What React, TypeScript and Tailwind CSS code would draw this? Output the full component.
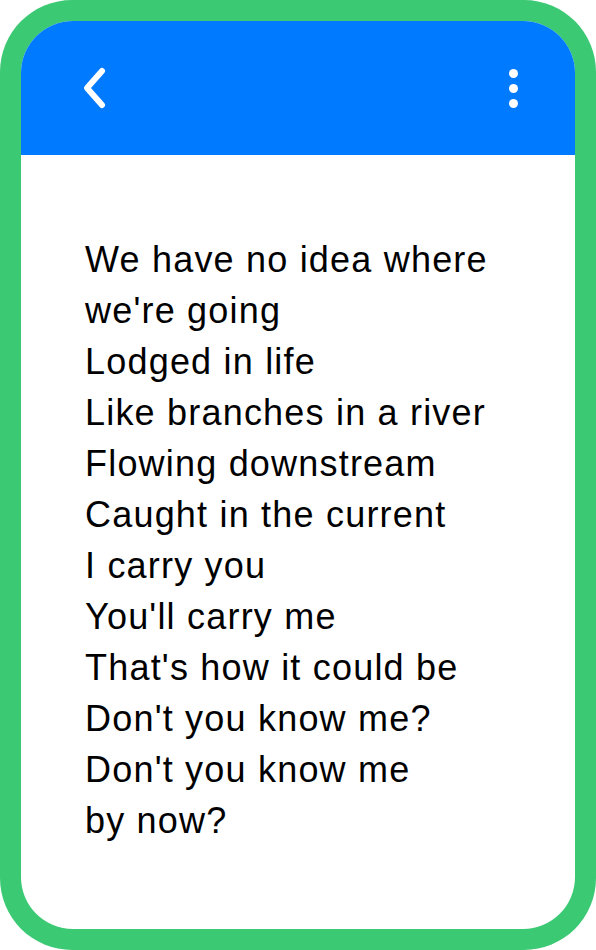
export default function App() {
  const lines = [
    "We have no idea where",
    "we're going",
    "Lodged in life",
    "Like branches in a river",
    "Flowing downstream",
    "Caught in the current",
    "I carry you",
    "You'll carry me",
    "That's how it could be",
    "Don't you know me?",
    "Don't you know me",
    "by now?",
  ];

  return (
    <div className="w-[596px] h-[950px] bg-white">
      <div className="w-full h-full rounded-[72px] bg-[#3bc974] p-[21px]">
        <div className="w-full h-full rounded-[52px] bg-white overflow-hidden flex flex-col">
          <header className="h-[134px] bg-[#007aff] flex items-center justify-between pl-[60px] pr-[56px]">
            <button className="w-[30px] h-[44px] flex items-center">
              <svg width="26" height="44" viewBox="0 0 26 44" fill="none">
                <path
                  d="M21 5 L6 22 L21 39"
                  stroke="white"
                  strokeWidth="6"
                  strokeLinecap="round"
                  strokeLinejoin="round"
                />
              </svg>
            </button>
            <button className="w-[12px] h-[44px] flex flex-col items-center justify-center gap-[6px]">
              <span className="w-[9px] h-[9px] rounded-full bg-white" />
              <span className="w-[9px] h-[9px] rounded-full bg-white" />
              <span className="w-[9px] h-[9px] rounded-full bg-white" />
            </button>
          </header>
          <main className="pt-[79px] pl-[64px] pr-[20px]">
            {lines.map((line, i) => (
              <p
                key={i}
                className="text-[36px] leading-[51px] tracking-[1.2px] text-black font-['Liberation_Sans',Arial,sans-serif] whitespace-nowrap"
              >
                {line}
              </p>
            ))}
          </main>
        </div>
      </div>
    </div>
  );
}
